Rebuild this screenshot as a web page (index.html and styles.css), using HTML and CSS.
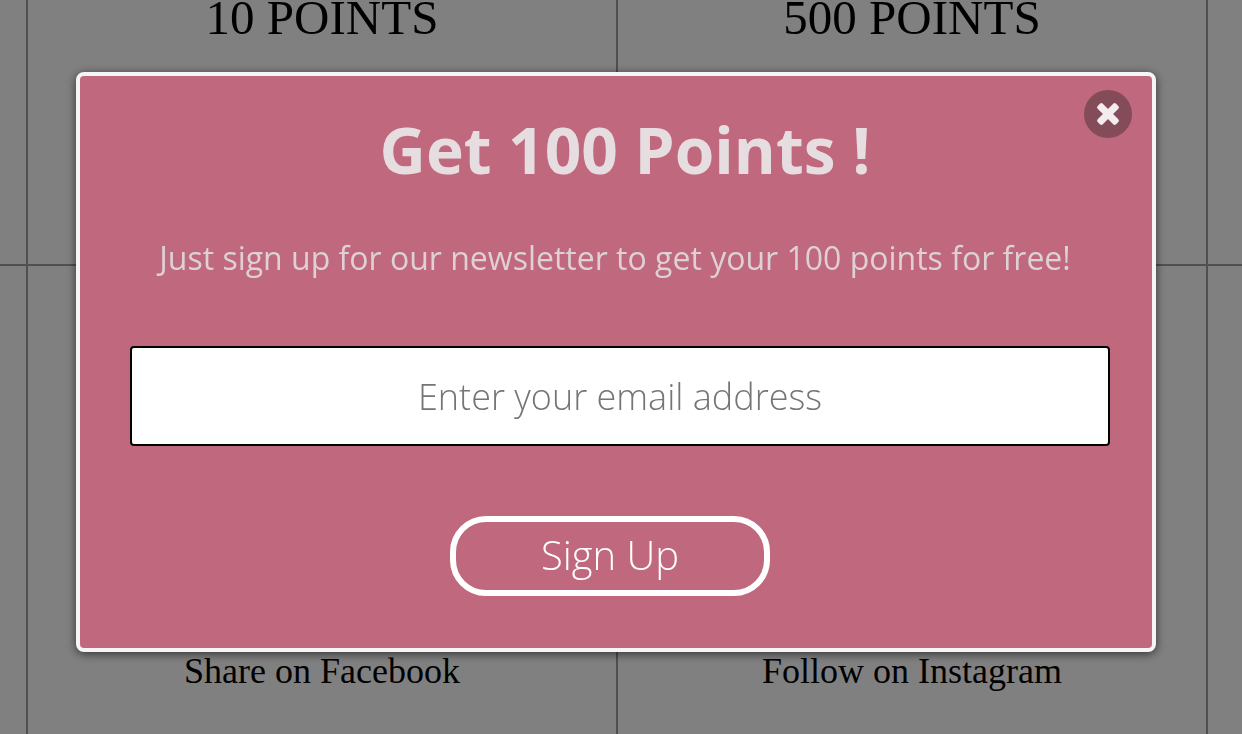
FILE: index.html
```html
<!DOCTYPE html>
<html lang="en">
<head>
  <meta charset="UTF-8">
  <meta name="viewport" content="width=device-width, initial-scale=1.0">
  <title>Rewards</title>
  <link rel="stylesheet" href="styles.css">
</head>
<body>
  <main class="rewards">
    <div class="cell"></div>
    <div class="cell"><h2 class="points">10 POINTS</h2></div>
    <div class="cell"><h2 class="points">500 POINTS</h2></div>
    <div class="cell last"></div>

    <div class="cell bottom"></div>
    <div class="cell bottom"><p class="action">Share on Facebook</p></div>
    <div class="cell bottom"><p class="action">Follow on Instagram</p></div>
    <div class="cell bottom last"></div>
  </main>

  <div class="overlay">
    <div class="modal" role="dialog" aria-modal="true" aria-labelledby="modal-title">
      <button class="close" type="button" aria-label="Close">
        <svg viewBox="0 0 24 24" width="24" height="24" aria-hidden="true">
          <rect x="-1" y="8.4" width="26" height="7.2" rx="2" transform="rotate(45 12 12)" />
          <rect x="-1" y="8.4" width="26" height="7.2" rx="2" transform="rotate(-45 12 12)" />
        </svg>
      </button>
      <h1 class="title" id="modal-title">Get 100 Points !</h1>
      <p class="text">Just sign up for our newsletter to get your 100 points for free!</p>
      <form class="signup">
        <input class="email" type="email" aria-label="Email address" placeholder="Enter your email address">
        <button class="submit" type="submit">Sign Up</button>
      </form>
    </div>
  </div>
</body>
</html>
```
FILE: styles.css
```css
* {
  box-sizing: border-box;
}

body {
  margin: 0;
  background: #808080;
  color: #000;
  font-family: "Open Sans", sans-serif;
}

/* rewards grid behind the popup */
.rewards {
  display: grid;
  grid-template-columns: 28px 1fr 1fr 34px;
  grid-template-rows: 266px 1fr;
  min-height: 100vh;
  font-family: "Liberation Serif", serif;
  text-align: center;
}

.cell {
  border-right: 2px solid #505050;
  border-bottom: 2px solid #505050;
}

.cell.last {
  border-right: none;
}

.cell.bottom {
  border-bottom: none;
  padding-top: 385px;
}

.points {
  margin: 0;
  font-size: 49px;
  line-height: 36px;
  font-weight: normal;
}

.action {
  margin: 0;
  font-size: 36px;
  line-height: 40px;
}

/* popup */
.overlay {
  position: fixed;
  top: 0;
  right: 0;
  bottom: 0;
  left: 0;
  padding: 72px 86px 82px 76px;
}

.modal {
  position: relative;
  padding: 32px 42px 52px 50px;
  background: #c0687d;
  border: 4px solid #f5f5f5;
  border-radius: 8px;
  box-shadow: 0 2px 10px rgba(0, 0, 0, 0.6);
  text-align: center;
}

.close {
  position: absolute;
  top: 14px;
  right: 20px;
  width: 48px;
  height: 48px;
  padding: 0;
  display: flex;
  justify-content: center;
  align-items: center;
  background: #844b59;
  border: none;
  border-radius: 50%;
  cursor: pointer;
}

.close svg {
  fill: #f3edef;
}

.title {
  margin: 0;
  padding-left: 10px;
  color: #e6dde0;
  font-size: 64px;
  line-height: 84px;
  font-weight: 700;
}

.text {
  margin: 44px 0 66px;
  padding-right: 10px;
  color: #ddd1d5;
  font-size: 32px;
  line-height: 44px;
}

.signup {
  display: flex;
  flex-direction: column;
}

.email {
  width: 100%;
  height: 100px;
  background: #fff;
  border: 2px solid #000;
  border-radius: 4px;
  color: #757575;
  font-family: inherit;
  font-size: 36px;
  font-weight: 300;
  text-align: center;
}

.email::placeholder {
  color: #757575;
}

.submit {
  align-self: center;
  width: 320px;
  height: 80px;
  margin: 70px 20px 0 0;
  padding: 0 0 4px;
  background: none;
  border: 6px solid #fff;
  border-radius: 36px;
  color: #fff;
  font-family: inherit;
  font-size: 40px;
  font-weight: 300;
  cursor: pointer;
}
```
